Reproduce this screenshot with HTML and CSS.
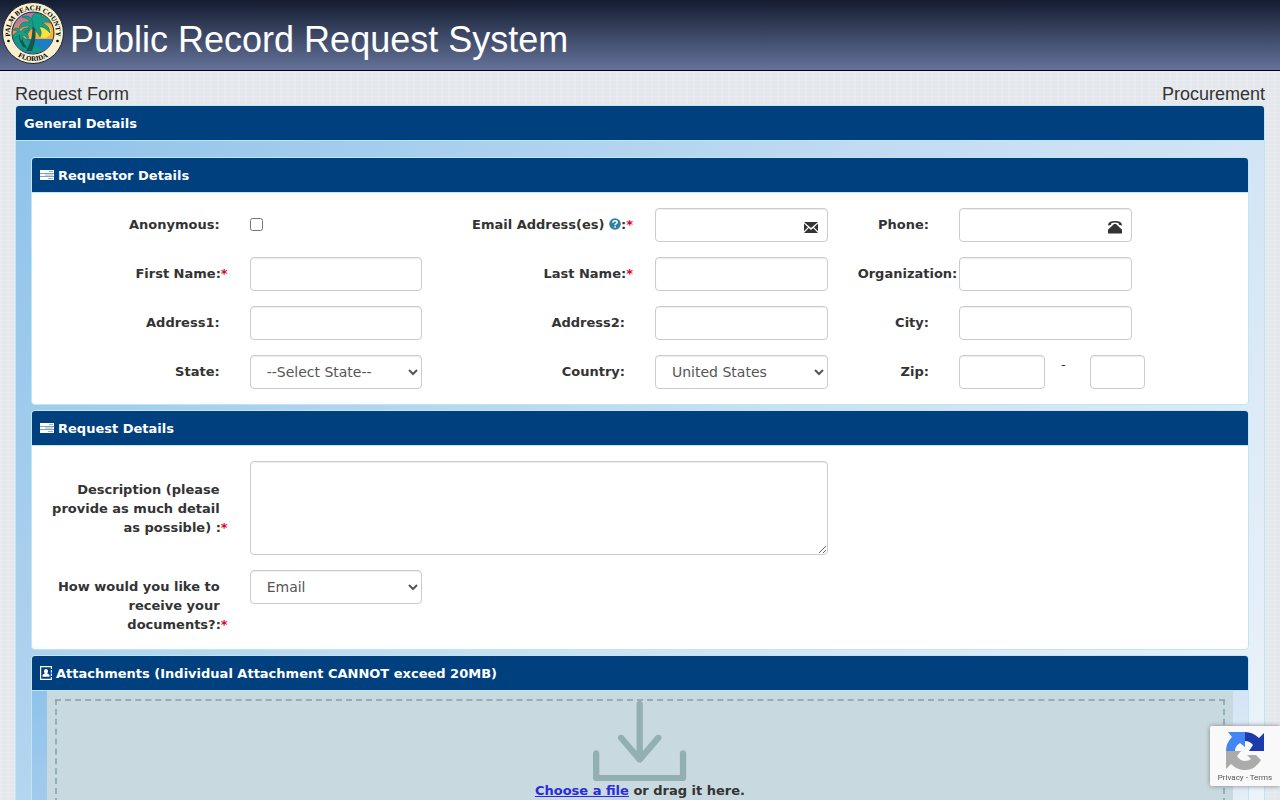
FILE: index.html
```html
<!DOCTYPE html>
<html lang="en">
<head>
  <meta charset="UTF-8" />
  <meta name="viewport" content="width=device-width, initial-scale=1.0"/>
  <title>Public Record Request System</title>
  <link rel="stylesheet" href="styles.css">
</head>
<body>

  <header class="site-header">
    <svg class="seal" viewBox="0 0 62 62" role="img" aria-label="Palm Beach County Florida">
      <defs>
        <linearGradient id="sky" x1="0" y1="0" x2="0.4" y2="1">
          <stop offset="0" stop-color="#6a7fc0"/>
          <stop offset="0.2" stop-color="#a878a8"/>
          <stop offset="0.4" stop-color="#ee8a5c"/>
          <stop offset="0.65" stop-color="#f7b03c"/>
        </linearGradient>
        <path id="arcTop" d="M9.4 39 A23 23 0 1 1 52.6 39"/>
        <path id="arcBottom" d="M3 31 A28 28 0 0 0 59 31"/>
      </defs>
      <circle cx="31" cy="31" r="30.5" fill="#f8f0cf" stroke="#1c2430"/>
      <circle cx="31" cy="31" r="21" fill="url(#sky)" stroke="#1c2430"/>
      <circle cx="42" cy="29" r="7" fill="#fbe43a"/>
      <path d="M11 37 L51 37 A21 21 0 0 1 31 51.5 A21 21 0 0 1 11 37z" fill="#1a7fc4"/>
      <path d="M10.5 33 Q22 32 29 42 Q37 44 41 48 A21 21 0 0 1 10.500 33z" fill="#0f9a84"/>
      <path d="M32 21 Q36 34 30 49 L24 49 Q32 36 30 22z M19 30 Q19 38 25 46 L21 45 Q16 38 17 30z" fill="#15574f"/>
      <g fill="#12a08b" stroke="#12504c" stroke-width="0.4">
        <path d="M32 22 Q29 11 20 15 Q26 16 28 20 Q18 18 17 27 Q22 23 28 24 Q21 28 24 35 Q27 28 32 24z"/>
        <path d="M31 22 Q27 11 36 11 Q41 12 40 15 Q45 13 49 21 Q43 19 40 21 Q48 23 48 31 Q42 24 37 25 Q41 30 38 35 Q34 29 31 24z"/>
        <path d="M19 30 Q15 23 11 28 Q14 28 16 30 Q10 31 11 38 Q14 34 18 33 Q17 37 20 39 Q21 35 21 33 Q24 34 26 38 Q28 32 22 30 Q26 29 27 27 Q22 24 19 30z"/>
      </g>
      <text class="seal-text"><textPath href="#arcTop" startOffset="50%" text-anchor="middle">PALM BEACH COUNTY</textPath></text>
      <text class="seal-text"><textPath href="#arcBottom" startOffset="50%" text-anchor="middle">FLORIDA</textPath></text>
      <circle cx="6.500" cy="39" r="1.300"/>
      <circle cx="55.500" cy="39" r="1.300"/>
    </svg>
    <h1 class="site-title">Public Record Request System</h1>
  </header>

  <main class="page">
    <div class="page-heading">
      <h2 class="page-name">Request Form</h2>
      <h2 class="page-name">Procurement</h2>
    </div>

    <form class="panel">
      <div class="panel-heading">General Details</div>
      <div class="panel-body shaded">

        <!-- REQUESTOR -->
        <section class="panel">
          <div class="panel-heading">
            <svg class="icon" viewBox="0 0 14 12" aria-hidden="true">
              <path fill="#fff" d="M0 1h14v3H0z M0 4.500h14v3H0z M0 8h14v3H0z"/>
              <path stroke="#7f9fbf" stroke-width="0.8" d="M9 2.500h4 M5 6h8 M8 9.500h5"/>
            </svg>
            Requestor Details
          </div>
          <div class="panel-body fields">
            <label class="field-label" for="anonymous">Anonymous:</label>
            <div class="field"><input type="checkbox" class="checkbox" id="anonymous"></div>
            <label class="field-label" for="email">Email Address(es)
              <svg class="help" viewBox="0 0 12 12" aria-hidden="true">
                <circle cx="6" cy="6" r="5.8" fill="#31809f"/>
                <path d="M3.9 4.7 Q4 2.8 6 2.8 Q8.1 2.8 8.1 4.4 Q8.1 5.3 6.9 5.9 Q6.1 6.3 6.1 7.3" fill="none" stroke="#fff" stroke-width="1.5"/>
                <path d="M5.3 8.2h1.6v1.5H5.3z" fill="#fff"/>
              </svg>:<span class="required">*</span></label>
            <div class="field has-icon">
              <input type="email" class="control" id="email">
              <svg class="control-icon" viewBox="0 0 14 14" aria-hidden="true">
                <path fill="#333" d="M0 2h14L7 8z M0 3.600l4 3.600L0 11.200z M14 3.600l-4 3.600 4 4z M4.800 8L7 9.900 9.200 8l4.800 5H0z"/>
              </svg>
            </div>
            <label class="field-label" for="phone">Phone:</label>
            <div class="field has-icon">
              <input type="tel" class="control" id="phone">
              <svg class="control-icon" viewBox="0 0 14 14" aria-hidden="true">
                <path fill="#333" d="M0 5.400 Q0 1 7 1 Q14 1 14 5.400 L11.200 5 L10.400 3 Q7 2.200 3.600 3 L2.800 5z M6 4h2L14 9.800V13.500H0V9.800z"/>
              </svg>
            </div>

            <label class="field-label" for="firstName">First Name:<span class="required">*</span></label>
            <div class="field"><input type="text" class="control" id="firstName"></div>
            <label class="field-label" for="lastName">Last Name:<span class="required">*</span></label>
            <div class="field"><input type="text" class="control" id="lastName"></div>
            <label class="field-label wide" for="organization">Organization:</label>
            <div class="field"><input type="text" class="control" id="organization"></div>

            <label class="field-label" for="address1">Address1:</label>
            <div class="field"><input type="text" class="control" id="address1"></div>
            <label class="field-label" for="address2">Address2:</label>
            <div class="field"><input type="text" class="control" id="address2"></div>
            <label class="field-label" for="city">City:</label>
            <div class="field"><input type="text" class="control" id="city"></div>

            <label class="field-label" for="state">State:</label>
            <div class="field"><select class="control" id="state"><option>--Select State--</option></select></div>
            <label class="field-label" for="country">Country:</label>
            <div class="field"><select class="control" id="country"><option>United States</option></select></div>
            <label class="field-label" for="zip">Zip:</label>
            <div class="field zip">
              <input type="text" class="control" id="zip">
              <span class="dash">-</span>
              <input type="text" class="control" id="zipExt" aria-label="Zip extension">
            </div>
          </div>
        </section>

        <!-- REQUEST -->
        <section class="panel">
          <div class="panel-heading">
            <svg class="icon" viewBox="0 0 14 12" aria-hidden="true">
              <path fill="#fff" d="M0 1h14v3H0z M0 4.500h14v3H0z M0 8h14v3H0z"/>
              <path stroke="#7f9fbf" stroke-width="0.8" d="M9 2.500h4 M5 6h8 M8 9.500h5"/>
            </svg>
            Request Details
          </div>
          <div class="panel-body fields">
            <label class="field-label middle" for="description">Description (please provide as much detail as possible) :<span class="required">*</span></label>
            <div class="field span-3"><textarea class="control description" id="description"></textarea></div>
            <label class="field-label new-row" for="delivery">How would you like to receive your documents?:<span class="required">*</span></label>
            <div class="field"><select class="control" id="delivery"><option>Email</option></select></div>
          </div>
        </section>

        <!-- ATTACHMENTS -->
        <section class="panel">
          <div class="panel-heading">
            <svg class="icon book" viewBox="0 0 12 14" aria-hidden="true">
              <path fill="none" stroke="#fff" stroke-width="1.2" d="M.6.6h10.800v12.800H.6z"/>
              <path fill="#fff" d="M2.500 10.800V8.800L4.800 7.600Q3.800 6.600 4 4.800 Q4.300 3 6 3 Q7.700 3 8 4.800 Q8.200 6.600 7.200 7.600L9.500 8.800v2z"/>
              <path stroke="#00407f" stroke-width="1.4" d="M11.400 3v1 M11.400 6.500v1 M11.400 10v1"/>
            </svg>
            Attachments (Individual Attachment CANNOT exceed 20MB)
          </div>
          <div class="panel-body shaded attachments">
            <div class="dropzone">
              <svg class="drop-icon" viewBox="0 0 50 43" aria-hidden="true">
                <path d="M48.4 26.5c-.9 0-1.7.7-1.7 1.7v11.6h-43.3v-11.6c0-.9-.7-1.7-1.7-1.7s-1.7.7-1.7 1.7v13.2c0 .9.7 1.7 1.7 1.7h46.7c.9 0 1.7-.7 1.7-1.7v-13.2c0-1-.7-1.7-1.7-1.7zm-24.5 6.1c.3.3.8.5 1.2.5.4 0 .9-.2 1.2-.5l10-11.6c.7-.7.7-1.7 0-2.4s-1.7-.7-2.4 0l-7.1 8.3v-25.3c0-.9-.7-1.7-1.7-1.7s-1.7.7-1.7 1.7v25.3l-7.1-8.3c-.7-.7-1.7-.7-2.4 0s-.7 1.7 0 2.4l10 11.6z"/>
              </svg>
              <div><a href="#" class="choose">Choose a file</a> or drag it here.</div>
            </div>
          </div>
        </section>

      </div>
    </form>
  </main>

  <aside class="captcha">
    <svg class="captcha-logo" viewBox="0 0 40 40" aria-hidden="true">
      <path fill="#1c3aa9" d="M20 1 Q28 1 34 7 L39 2 V20 H24 L28 14 Q25 10 20 10z"/>
      <path fill="#4285f4" d="M20 1 V16 L15 12 Q10 15 10 20 H1 Q1 12 7 6 L3 1z"/>
      <path fill="#ababab" d="M1 20 H16 L12 25 Q15 30 20 30 Q24 30 26 28 L22 24 H31 L36 29 Q30 39 20 39 Q12 39 6 33 L1 38z"/>
    </svg>
    <div><a href="#" class="captcha-link">Privacy</a> - <a href="#" class="captcha-link">Terms</a></div>
  </aside>

</body>
</html>
```

FILE: styles.css
```css
* {
  box-sizing: border-box;
}

body {
  margin: 0;
  height: 100vh;
  overflow: hidden;
  font-family: Verdana, 'DejaVu Sans', sans-serif;
  font-size: 13px;
  line-height: 19px;
  color: #333;
  background-color: #e4e8ed;
  background-image:
    repeating-linear-gradient(rgba(255, 255, 255, 0.15) 0 1px, transparent 1px 4px),
    repeating-linear-gradient(90deg, rgba(255, 255, 255, 0.1) 0 2px, transparent 2px 7px);
}

.site-header {
  display: flex;
  height: 71px;
  padding: 2px;
  gap: 6px;
  background: linear-gradient(#131c30, #65739a);
  border-bottom: 1px solid #000022;
}

.seal {
  width: 62px;
  height: 62px;
}

.seal-text {
  font-family: 'Liberation Serif', serif;
  font-size: 7px;
  font-weight: bold;
}

.site-title {
  margin: 0;
  padding-top: 18px;
  font-family: 'Liberation Sans', Arial, sans-serif;
  font-size: 36px;
  font-weight: normal;
  line-height: 40px;
  color: #fff;
}

.page {
  padding: 13px 15px;
}

.page-heading {
  display: flex;
  justify-content: space-between;
}

.page-name {
  margin: 0;
  font-family: 'Liberation Sans', Arial, sans-serif;
  font-size: 18px;
  font-weight: normal;
  line-height: 21px;
}

/* Panels */
.panel {
  margin-bottom: 5px;
  background: #fff;
  border: 1px solid #bce8f1;
  border-radius: 4px;
}

.panel-heading {
  display: flex;
  align-items: center;
  gap: 4px;
  height: 35px;
  padding: 0 8px;
  font-weight: bold;
  color: #fff;
  background: #00407f;
  border-bottom: 1px solid #bce8f1;
  border-radius: 3px 3px 0 0;
}

.panel-body {
  padding: 16px 15px;
}

.shaded {
  background: linear-gradient(135deg, #8fc3ea, #c9dff3 50%, #f2f6fb);
}

.icon {
  width: 14px;
  height: 12px;
}

.book {
  width: 12px;
  height: 14px;
}

/* Form fields: three label and input pairs, last twelfth left free */
.fields {
  display: grid;
  grid-template-columns: 2fr 2fr 2fr 2fr 1fr 2fr;
  row-gap: 15px;
  padding: 15px 8.3333% 15px 0;
}

.field {
  min-width: 0;
  padding: 0 15px;
}

.span-3 {
  grid-column: span 3;
}

.new-row {
  grid-column-start: 1;
}

.field-label {
  min-width: 0;
  padding: 7px 15px 0;
  font-weight: bold;
  text-align: right;
}

.middle {
  align-self: center;
  padding-top: 0;
}

.wide {
  padding-right: 0;
  text-align: left;
}

.required {
  margin-right: -8px;
  color: #e2001a;
}

.help {
  width: 12px;
  height: 12px;
  vertical-align: -1px;
}

.control {
  display: block;
  width: 100%;
  height: 34px;
  padding: 6px 12px;
  font-family: inherit;
  font-size: 14px;
  color: #555;
  background: #fff;
  border: 1px solid #ccc;
  border-radius: 4px;
  box-shadow: inset 0 1px 1px rgba(0, 0, 0, 0.075);
}

.description {
  height: 94px;
}

.checkbox {
  display: block;
  width: 13px;
  height: 13px;
  margin: 10px 0 0;
}

.has-icon {
  position: relative;
}

.control-icon {
  position: absolute;
  top: 12px;
  right: 25px;
  width: 14px;
  height: 14px;
}

.zip {
  display: grid;
  grid-template-columns: 86px 45px 55px;
  padding-right: 0;
}

.dash {
  padding-left: 16px;
}

/* Attachments */
.attachments {
  padding: 0 15px;
  background: linear-gradient(160deg, #8fc3ea, #c3daf2 50%, #f2f6fb);
}

.dropzone {
  padding: 10px 0;
  height: 200px;
  font-weight: bold;
  text-align: center;
  background: #c8dadf;
  outline: 2px dashed #92b0b3;
  outline-offset: -10px;
}

.drop-icon {
  display: block;
  height: 80px;
  margin: 0 auto;
  fill: #92b0b3;
}

.choose {
  color: #2a2ae0;
  text-decoration: underline;
}

/* reCAPTCHA badge in the corner of the window */
.captcha {
  position: fixed;
  right: 0;
  bottom: 14px;
  width: 70px;
  height: 60px;
  padding-top: 5px;
  overflow: hidden;
  font-family: Roboto, sans-serif;
  font-size: 8px;
  line-height: 14px;
  text-align: center;
  color: #555;
  background: #f9f9f9;
  border-radius: 2px 0 0 2px;
  box-shadow: 0 0 5px gray;
}

.captcha-logo {
  display: block;
  width: 40px;
  height: 40px;
  margin: 0 auto;
}

.captcha-link {
  color: #555;
  text-decoration: none;
}
```
